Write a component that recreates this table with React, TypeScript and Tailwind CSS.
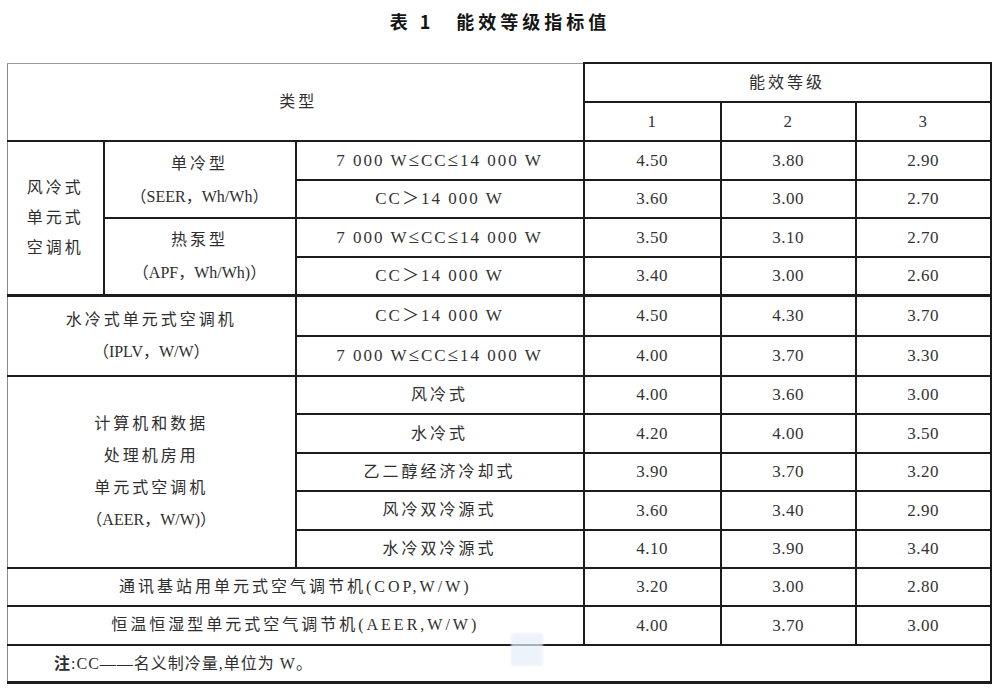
const cjk = "font-['Liberation_Serif','Noto_Sans_CJK_SC',serif]";

const cell = "border-2 border-[#1c1c1c] text-center align-middle p-0";
const leftEdge = "border-l border-l-[#8a8a8a]";
const label = "text-[16px] tracking-[3px] text-[#2e2e2e]";
const cond = "text-[17px] tracking-[2px] text-[#333]";
const num = "text-[17px] tracking-[0.5px] text-[#333]";

type Row = { cond: string; v: [string, string, string] };

const Values = ({ v, thick }: { v: [string, string, string]; thick?: boolean }) => (
  <>
    {v.map((x, i) => (
      <td key={i} className={`${cell} ${num} ${thick ? "border-t-[3px]" : ""}`}>
        {x}
      </td>
    ))}
  </>
);

// renders the "≤" a little larger, as in the printed table
const Cond = ({ text }: { text: string }) => (
  <>
    {text.split("≤").map((part, i) => (
      <span key={i}>
        {i > 0 && <span className="text-[19px] leading-none">≤</span>}
        {part}
      </span>
    ))}
  </>
);

const airRows: Row[] = [
  { cond: "7 000 W≤CC≤14 000 W", v: ["4.50", "3.80", "2.90"] },
  { cond: "CC＞14 000 W", v: ["3.60", "3.00", "2.70"] },
  { cond: "7 000 W≤CC≤14 000 W", v: ["3.50", "3.10", "2.70"] },
  { cond: "CC＞14 000 W", v: ["3.40", "3.00", "2.60"] },
];

const waterRows: Row[] = [
  { cond: "CC＞14 000 W", v: ["4.50", "4.30", "3.70"] },
  { cond: "7 000 W≤CC≤14 000 W", v: ["4.00", "3.70", "3.30"] },
];

const dataRoomRows: Row[] = [
  { cond: "风冷式", v: ["4.00", "3.60", "3.00"] },
  { cond: "水冷式", v: ["4.20", "4.00", "3.50"] },
  { cond: "乙二醇经济冷却式", v: ["3.90", "3.70", "3.20"] },
  { cond: "风冷双冷源式", v: ["3.60", "3.40", "2.90"] },
  { cond: "水冷双冷源式", v: ["4.10", "3.90", "3.40"] },
];

export default function App() {
  return (
    <div className={`relative h-[688px] w-[1000px] overflow-hidden bg-white ${cjk}`}>
      <div className="flex h-[62px] items-start justify-center pt-[8px]">
        <h1 className="text-[18px] font-bold tracking-[4px] text-[#151515] font-['Noto_Sans_CJK_SC',sans-serif]">
          表 1<span className="ml-[22px]">能效等级指标值</span>
        </h1>
      </div>

      <table className="ml-[7px] w-[983px] table-fixed border-collapse">
        <colgroup>
          <col className="w-[96px]" />
          <col className="w-[192px]" />
          <col className="w-[288px]" />
          <col className="w-[137px]" />
          <col className="w-[135px]" />
          <col className="w-[135px]" />
        </colgroup>
        <tbody>
          <tr className="h-[39px]">
            <td
              colSpan={3}
              rowSpan={2}
              className={`${cell} border-t border-t-[#9a9a9a] ${leftEdge} ${label} pl-[6px]`}
            >
              类型
            </td>
            <td colSpan={3} className={`${cell} ${label}`}>
              能效等级
            </td>
          </tr>
          <tr className="h-[39px]">
            <td className={`${cell} ${num}`}>1</td>
            <td className={`${cell} ${num}`}>2</td>
            <td className={`${cell} ${num}`}>3</td>
          </tr>

          {airRows.map((r, i) => (
            <tr key={`a${i}`} className="h-[38.5px]">
              {i === 0 && (
                <td rowSpan={4} className={`${cell} ${leftEdge} ${label} leading-[30px]`}>
                  风冷式
                  <br />
                  单元式
                  <br />
                  空调机
                </td>
              )}
              {i === 0 && (
                <td rowSpan={2} className={`${cell} ${label} leading-[33px]`}>
                  单冷型
                  <br />
                  <span className="tracking-normal">（SEER，Wh/Wh）</span>
                </td>
              )}
              {i === 2 && (
                <td rowSpan={2} className={`${cell} ${label} leading-[33px]`}>
                  热泵型
                  <br />
                  <span className="tracking-normal">（APF，Wh/Wh)）</span>
                </td>
              )}
              <td className={`${cell} ${cond}`}>
                <Cond text={r.cond} />
              </td>
              <Values v={r.v} />
            </tr>
          ))}

          {waterRows.map((r, i) => (
            <tr key={`w${i}`} className="h-[40.5px]">
              {i === 0 && (
                <td
                  colSpan={2}
                  rowSpan={2}
                  className={`${cell} border-t-[3px] ${leftEdge} ${label} leading-[32px]`}
                >
                  水冷式单元式空调机
                  <br />
                  <span className="tracking-normal">（IPLV，W/W）</span>
                </td>
              )}
              <td className={`${cell} ${cond} ${i === 0 ? "border-t-[3px]" : ""}`}>
                <Cond text={r.cond} />
              </td>
              <Values v={r.v} thick={i === 0} />
            </tr>
          ))}

          {dataRoomRows.map((r, i) => (
            <tr key={`d${i}`} className="h-[38.4px]">
              {i === 0 && (
                <td
                  colSpan={2}
                  rowSpan={5}
                  className={`${cell} ${leftEdge} ${label} leading-[32px]`}
                >
                  计算机和数据
                  <br />
                  处理机房用
                  <br />
                  单元式空调机
                  <br />
                  <span className="tracking-normal">（AEER，W/W)）</span>
                </td>
              )}
              <td className={`${cell} ${label}`}>{r.cond}</td>
              <Values v={r.v} />
            </tr>
          ))}

          <tr className="h-[38px]">
            <td colSpan={3} className={`${cell} ${leftEdge} ${label}`}>
              通讯基站用单元式空气调节机(COP,W/W)
            </td>
            <Values v={["3.20", "3.00", "2.80"]} />
          </tr>
          <tr className="h-[39px]">
            <td colSpan={3} className={`${cell} ${leftEdge} ${label}`}>
              恒温恒湿型单元式空气调节机(AEER,W/W)
            </td>
            <Values v={["4.00", "3.70", "3.00"]} />
          </tr>
          <tr className="h-[38px]">
            <td
              colSpan={6}
              className={`${cell} border-b-[3px] ${leftEdge} pl-[46px] text-left text-[16px] tracking-[1px] text-[#2e2e2e]`}
            >
              <span className="font-bold">注</span>:CC——名义制冷量,单位为 W。
            </td>
          </tr>
        </tbody>
      </table>

      <div className="absolute left-[511px] top-[633px] h-[33px] w-[32px] rounded-[2px] bg-[#e6eef9] opacity-70 blur-[1px]" />
    </div>
  );
}
